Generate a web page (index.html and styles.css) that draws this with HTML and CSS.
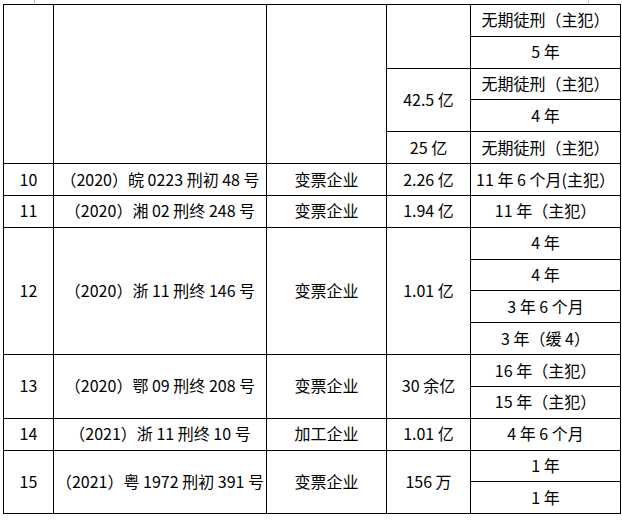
FILE: index.html
```html
<!DOCTYPE html>
<html lang="zh">
<head>
<meta charset="utf-8">
<title>案例表</title>
<link rel="stylesheet" href="styles.css">
</head>
<body>
<div class="page">
  <span class="mark mark-left"></span>
  <span class="mark mark-right"></span>
  <table class="cases">
    <colgroup>
      <col class="c-no">
      <col class="c-case">
      <col class="c-type">
      <col class="c-amount">
      <col class="c-sentence">
    </colgroup>
    <tbody>
      <tr><td rowspan="5"></td><td rowspan="5"></td><td rowspan="5"></td><td rowspan="2"></td><td>无期徒刑（主犯）</td></tr>
      <tr><td>5 年</td></tr>
      <tr><td rowspan="2">42.5 亿</td><td>无期徒刑（主犯）</td></tr>
      <tr><td>4 年</td></tr>
      <tr><td>25 亿</td><td>无期徒刑（主犯）</td></tr>
      <tr><td>10</td><td>（2020）皖 0223 刑初 48 号</td><td>变票企业</td><td>2.26 亿</td><td>11 年 6 个月(主犯）</td></tr>
      <tr><td>11</td><td>（2020）湘 02 刑终 248 号</td><td>变票企业</td><td>1.94 亿</td><td>11 年（主犯）</td></tr>
      <tr><td rowspan="4">12</td><td rowspan="4">（2020）浙 11 刑终 146 号</td><td rowspan="4">变票企业</td><td rowspan="4">1.01 亿</td><td>4 年</td></tr>
      <tr><td>4 年</td></tr>
      <tr><td>3 年 6 个月</td></tr>
      <tr><td>3 年（缓 4）</td></tr>
      <tr><td rowspan="2">13</td><td rowspan="2">（2020）鄂 09 刑终 208 号</td><td rowspan="2">变票企业</td><td rowspan="2">30 余亿</td><td>16 年（主犯）</td></tr>
      <tr><td>15 年（主犯）</td></tr>
      <tr><td>14</td><td>（2021）浙 11 刑终 10 号</td><td>加工企业</td><td>1.01 亿</td><td>4 年 6 个月</td></tr>
      <tr><td rowspan="2">15</td><td rowspan="2">（2021）粤 1972 刑初 391 号</td><td rowspan="2">变票企业</td><td rowspan="2">156 万</td><td>1 年</td></tr>
      <tr><td>1 年</td></tr>
    </tbody>
  </table>
</div>
</body>
</html>
```

FILE: styles.css
```css
html, body {
  margin: 0;
  padding: 0;
  background: #ffffff;
}

.page {
  position: relative;
  width: 622px;
  height: 522px;
  padding: 4px 0 0 3px;
  box-sizing: border-box;
}

.mark {
  position: absolute;
  top: 0;
  width: 1px;
  height: 4px;
  background: #c8c8c8;
}
.mark-left { left: 34px; }
.mark-right { left: 588px; }

.cases {
  border-collapse: collapse;
  table-layout: fixed;
  width: 617px;
  font-family: "Noto Sans CJK SC", sans-serif;
  font-size: 16px;
  color: #000;
  text-spacing-trim: space-all;
}

.c-no { width: 50px; }
.c-case { width: 213px; }
.c-type { width: 120px; }
.c-amount { width: 84px; }
.c-sentence { width: 150px; }

.cases tr {
  height: 31.84px;
}

.cases td {
  border: 1px solid #000;
  padding: 0 0 2px 0;
  text-align: center;
  vertical-align: middle;
  white-space: nowrap;
  line-height: 20px;
}
```
